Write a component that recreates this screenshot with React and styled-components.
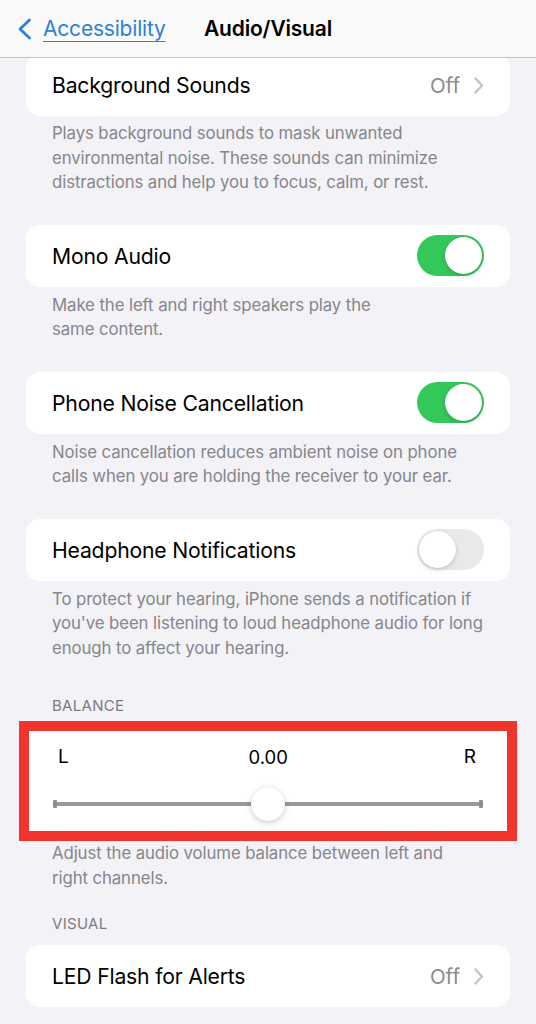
import React from 'react';
import styled, { createGlobalStyle } from 'styled-components';

const GlobalStyle = createGlobalStyle`
  html, body { margin: 0; padding: 0; background: #f2f2f7; }
  body { font-family: Inter, "Noto Sans", "Liberation Sans", sans-serif; -webkit-font-smoothing: antialiased; }
`;

const Screen = styled.div`
  width: 536px;
  height: 1024px;
  overflow: hidden;
  display: flex;
  flex-direction: column;
  background: #f2f2f7;
`;

const NavBar = styled.header`
  flex: none;
  height: 57px;
  display: grid;
  grid-template-columns: 1fr auto 1fr;
  align-items: center;
  background: #f9f9f9;
  border-bottom: 1px solid #c6c6c8;
  position: relative;
  z-index: 2;
`;

const BackLink = styled.a`
  display: flex;
  align-items: center;
  gap: 10px;
  padding-left: 16px;
  color: #2f7fd6;
  font-size: 21px;
  letter-spacing: -0.2px;
  text-decoration: underline;
  text-decoration-thickness: 1px;
  text-underline-offset: 5px;
`;

const Title = styled.h1`
  margin: 0;
  font-size: 21px;
  font-weight: 600;
  color: #000;
  letter-spacing: -0.2px;
`;

const List = styled.main`
  flex: 1;
  overflow: hidden;
  display: flex;
  flex-direction: column;
  margin-top: -4px;
`;

const Card = styled.div`
  margin: 0 26px;
  background: #fff;
  border-radius: 14px;
  margin-top: ${p => p.$top || 0}px;
`;

const Row = styled.div`
  height: 62px;
  display: flex;
  align-items: center;
  justify-content: space-between;
  padding: 0 26px;
`;

const Label = styled.span`
  font-size: 21.2px;
  color: #000;
  letter-spacing: -0.2px;
`;

const Detail = styled.span`
  display: flex;
  align-items: center;
  gap: 14px;
  font-size: 20.5px;
  color: #8a8a8e;
`;

const Footer = styled.p`
  margin: 0;
  padding: ${p => p.$pad ?? 6}px 52px 0;
  font-size: 16.8px;
  line-height: 24.5px;
  color: #86868b;
  letter-spacing: -0.1px;
`;

const Header = styled.h2`
  margin: ${p => p.$top}px 52px 0;
  font-size: 15px;
  font-weight: 400;
  line-height: 18px;
  color: #7c7c80;
  letter-spacing: 0.3px;
`;

const Track = styled.span`
  width: 67px;
  height: 41px;
  border-radius: 21px;
  background: ${p => (p.$on ? '#34c759' : '#e9e9eb')};
  display: flex;
  align-items: center;
  justify-content: ${p => (p.$on ? 'flex-end' : 'flex-start')};
  padding: 2px;
  box-sizing: border-box;
`;

const Knob = styled.span`
  width: 37px;
  height: 37px;
  border-radius: 50%;
  background: #fff;
  box-shadow: 0 2px 5px rgba(0, 0, 0, 0.15), 0 0 1px rgba(0, 0, 0, 0.12);
`;

// annotated balance card, outlined in red
const Marked = styled.div`
  margin: 6px 19px 0;
  border: 10px solid #f0362c;
  background: #fff;
  padding: 14px 24px 0 24px;
  box-sizing: border-box;
  height: 120px;
`;

const Ends = styled.div`
  display: flex;
  justify-content: space-between;
  align-items: center;
  padding: 0 7px 0 5px;
  font-size: 19px;
  color: #000;
`;

const Value = styled.span`
  font-size: 18.5px;
  margin-left: 4px;
`;

const Slider = styled.div`
  position: relative;
  margin-top: 19px;
  height: 34px;
  display: flex;
  align-items: center;
`;

const Line = styled.div`
  flex: 1;
  height: 4px;
  background: #9a9a9c;
  position: relative;
  &::before, &::after {
    content: '';
    position: absolute;
    top: -2px;
    width: 4px;
    height: 8px;
    background: #8e8e90;
    border-radius: 1px;
  }
  &::before { left: 0; }
  &::after { right: 0; }
`;

const Thumb = styled.span`
  position: absolute;
  top: 0;
  width: 34px;
  height: 34px;
  border-radius: 50%;
  background: #fff;
  box-shadow: 0 2px 6px rgba(0, 0, 0, 0.18), 0 0 1px rgba(0, 0, 0, 0.15);
`;

const Chevron = () => (
  <svg width="10" height="17" viewBox="0 0 10 17">
    <path d="M1.5 1.5 L8 8.5 L1.5 15.5" fill="none" stroke="#c4c4c7" strokeWidth="2.4" strokeLinecap="round" strokeLinejoin="round" />
  </svg>
);

const BackChevron = () => (
  <svg width="17" height="24" viewBox="0 0 17 24">
    <path d="M13.5 3 L4 12 L13.5 21" fill="none" stroke="#2f7fd6" strokeWidth="2.8" strokeLinecap="round" strokeLinejoin="round" />
  </svg>
);

const Toggle = ({ on }) => (
  <Track $on={on}><Knob /></Track>
);

export default function App() {
  const balance = 0;
  const pos = (balance + 1) / 2;

  return (
    <Screen>
      <GlobalStyle />
      <NavBar>
        <BackLink><BackChevron />Accessibility</BackLink>
        <Title>Audio/Visual</Title>
        <span />
      </NavBar>
      <List>
        <Card>
          <Row>
            <Label>Background Sounds</Label>
            <Detail>Off<Chevron /></Detail>
          </Row>
        </Card>
        <Footer $pad={5}>
          Plays background sounds to mask unwanted environmental noise. These sounds can minimize distractions and help you to focus, calm, or rest.
        </Footer>

        <Card $top={30}>
          <Row>
            <Label>Mono Audio</Label>
            <Toggle on />
          </Row>
        </Card>
        <Footer>Make the left and right speakers play the<br />same content.</Footer>

        <Card $top={30}>
          <Row>
            <Label>Phone Noise Cancellation</Label>
            <Toggle on />
          </Row>
        </Card>
        <Footer>Noise cancellation reduces ambient noise on phone calls when you are holding the receiver to your ear.</Footer>

        <Card $top={30}>
          <Row>
            <Label>Headphone Notifications</Label>
            <Toggle />
          </Row>
        </Card>
        <Footer>To protect your hearing, iPhone sends a notification if you've been listening to loud headphone audio for long enough to affect your hearing.</Footer>

        <Header $top={37}>BALANCE</Header>
        <Marked>
          <Ends>
            <span>L</span>
            <Value>0.00</Value>
            <span>R</span>
          </Ends>
          <Slider>
            <Line />
            <Thumb style={{ left: `calc(${pos * 100}% - 17px)` }} />
          </Slider>
        </Marked>
        <Footer $pad={0}>Adjust the audio volume balance between left and<br />right channels.</Footer>

        <Header $top={25}>VISUAL</Header>
        <Card $top={12}>
          <Row>
            <Label>LED Flash for Alerts</Label>
            <Detail>Off<Chevron /></Detail>
          </Row>
        </Card>
      </List>
    </Screen>
  );
}
